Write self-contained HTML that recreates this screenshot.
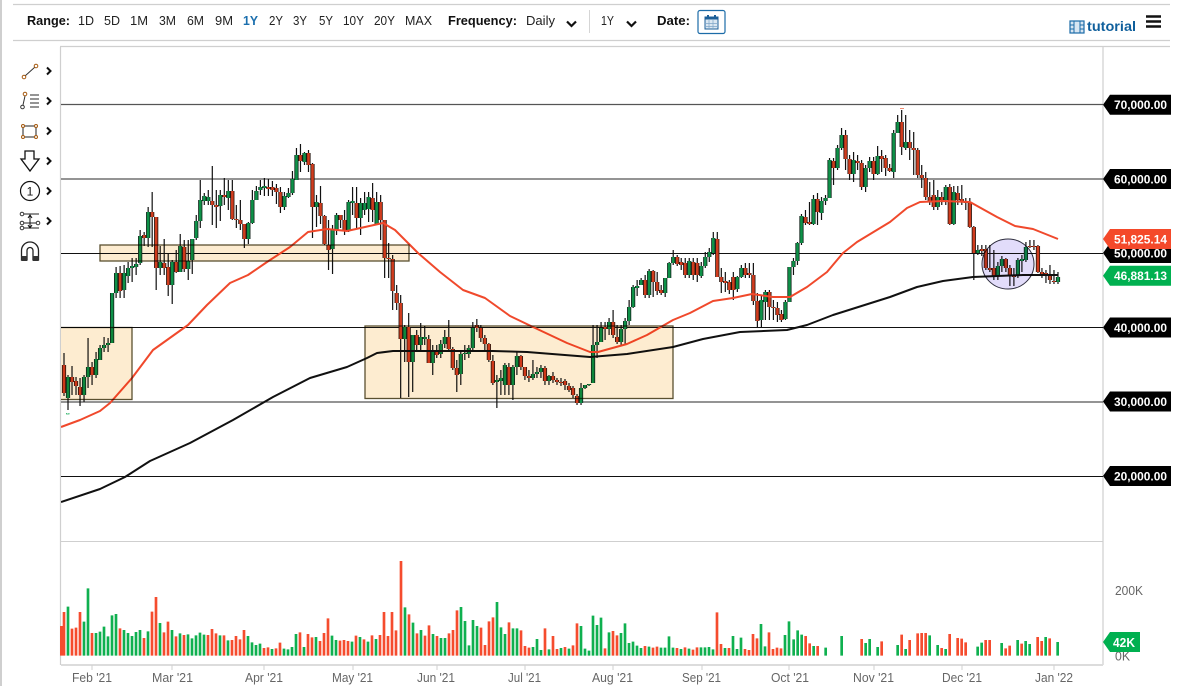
<!DOCTYPE html>
<html><head><meta charset="utf-8"><title>Chart</title>
<style>
html,body{margin:0;padding:0;background:#fff;width:1179px;height:686px;overflow:hidden}
svg{display:block;filter:blur(.35px)}
text{font-family:"Liberation Sans",sans-serif}
.h{font-size:13px;fill:#222}
.b{font-weight:bold;fill:#111}
.l{font-size:12px;font-weight:bold;fill:#fff}
.d{font-size:13px;fill:#666}
</style></head><body>
<svg width="1179" height="686" viewBox="0 0 1179 686" xmlns="http://www.w3.org/2000/svg">
<defs><clipPath id="plot"><rect x="61" y="47" width="1042" height="494"/></clipPath>
<path id="gb" d="M68 377V398M84 377V395M88 367V377M96 359V375M100 348V360M104 345V348M108 343V345M112 293V343M116 273V293M124 273V290M128 268V276M132 266V268M136 264V267M140 236V263M148 212V238M160 262V268M172 262V285M180 246V272M188 261V269M192 239V260M196 221V238M200 200V221M204 196V201M208 197V201M220 195V206M228 191V198M248 223V239M252 200V223M256 191V200M260 187V190M264 186V188M284 196V207M288 193V197M292 179V193M296 155V180M304 153V162M316 202V207M332 229V249M336 215V230M348 202V231M352 201V203M360 203V218M364 203V210M368 197V209M376 202V224M404 327V339M412 335V362M420 337V345M424 337V339M432 352V363M440 344V354M444 337V344M460 354V374M464 353V354M468 348V354M472 328V348M496 380V382M500 378V381M504 365V385M512 367V385M516 356V367M532 374V378M536 372V374M540 368V372M548 376V381M580 388V403M584 385V388M588 384V385M592 345V383M596 342V345M600 328V342M608 322V329M620 329V342M624 321V329M628 307V321M632 287V307M636 286V288M640 280V285M648 271V295M664 278V293M668 263V278M672 257V263M688 261V275M700 266V276M704 257V266M708 252V257M712 238V253M736 277V289M740 268V277M760 300V320M764 292V302M784 302V319M788 267V302M792 261V267M796 243V261M800 216V243M812 199V224M820 201V213M824 198V201M828 160V198M836 148V168M840 135V148M852 160V174M864 168V187M868 161V168M876 156V174M892 133V172M896 122V133M904 142V148M936 197V207M944 187V200M952 192V224M976 250V253M996 266V276M1000 259V266M1016 260V276M1020 259V261M1024 247V260M1056 277V282"/>
<path id="rb" d="M64 365V393M72 377V382M76 381V386M80 387V395M92 367V375M120 273V291M144 235V238M152 212V217M156 217V268M164 263V268M168 267V285M176 262V272M184 247V269M212 201V205M216 205V207M224 195V197M232 191V219M236 219V220M240 220V224M244 224V239M268 187V189M272 187V190M276 188V192M280 192V207M300 155V161M308 153V165M312 164V207M320 203V216M324 216V244M328 245V250M340 215V220M344 220V231M356 203V218M372 198V210M380 202V220M384 220V258M388 258V259M392 259V291M396 293V303M400 303V339M408 327V362M416 335V345M428 339V363M436 352V355M448 337V349M452 349V368M456 368V375M476 325V328M480 328V338M484 338V344M488 344V360M492 361V383M508 367V385M520 356V367M524 367V376M528 376V378M544 368V381M552 376V380M556 380V382M560 382V383M564 381V385M568 386V390M572 388V395M576 396V403M604 327V329M612 322V335M616 337V342M644 280V295M652 271V282M656 282V291M660 290V293M676 257V264M680 262V265M684 263V275M692 262V275M696 263V275M716 239V277M720 277V282M724 281V283M728 282V290M732 277V290M744 268V275M748 273V275M752 275V301M756 301V321M768 292V307M772 307V308M776 308V315M780 314V320M804 217V223M808 222V224M816 199V212M832 161V168M844 135V159M848 159V174M856 161V163M860 163V187M872 161V174M880 156V159M884 158V168M888 168V171M900 122V147M908 142V148M912 148V150M916 150V175M920 175V178M924 178V197M928 197V202M932 195V207M940 197V200M948 187V224M956 193V200M960 199V201M964 201V203M968 202V227M972 227V253M980 249V251M984 249V268M988 268V270M992 268V276M1004 259V268M1008 268V276M1012 276V277M1028 246V247M1032 246V247M1036 246V272M1040 272V274M1044 273V275M1048 274V280M1052 281V282"/>
</defs>

<!-- frame -->
<g fill="none" stroke="#cfcfcf">
<path d="M1 0V686" stroke-width="2"/>
<path d="M13 4.500H1170M13 40.500H1170M60 46.500H1170" stroke-width="1.200"/>
<path d="M60.500 47V665M1103 47V665" stroke-width="1.200"/>
<path d="M61 541.500H1103"/>
<path d="M61 665H1103" stroke-width="2" stroke="#dcdcdc"/>
<path d="M92 665V670M172 665V670M264 665V670M353 665V670M437 665V670M525 665V670M613 665V670M702 665V670M789 665V670M874 665V670M962 665V670M1054 665V670"/>
</g>

<!-- header -->
<text x="27" y="25" class="h b" textLength="43" lengthAdjust="spacingAndGlyphs">Range:</text>
<text x="78" y="25" class="h" textLength="16" lengthAdjust="spacingAndGlyphs">1D</text>
<text x="104" y="25" class="h" textLength="16" lengthAdjust="spacingAndGlyphs">5D</text>
<text x="130" y="25" class="h" textLength="18" lengthAdjust="spacingAndGlyphs">1M</text>
<text x="159" y="25" class="h" textLength="17" lengthAdjust="spacingAndGlyphs">3M</text>
<text x="187" y="25" class="h" textLength="17" lengthAdjust="spacingAndGlyphs">6M</text>
<text x="215" y="25" class="h" textLength="18" lengthAdjust="spacingAndGlyphs">9M</text>
<text x="243" y="25" class="h" style="font-weight:bold;fill:#1b6fae" textLength="15" lengthAdjust="spacingAndGlyphs">1Y</text>
<text x="269" y="25" class="h" textLength="14" lengthAdjust="spacingAndGlyphs">2Y</text>
<text x="293" y="25" class="h" textLength="14" lengthAdjust="spacingAndGlyphs">3Y</text>
<text x="319" y="25" class="h" textLength="14" lengthAdjust="spacingAndGlyphs">5Y</text>
<text x="343" y="25" class="h" textLength="21" lengthAdjust="spacingAndGlyphs">10Y</text>
<text x="374" y="25" class="h" textLength="21" lengthAdjust="spacingAndGlyphs">20Y</text>
<text x="405" y="25" class="h" textLength="27" lengthAdjust="spacingAndGlyphs">MAX</text>
<text x="448" y="25" class="h b" textLength="69" lengthAdjust="spacingAndGlyphs">Frequency:</text>
<text x="526" y="25" class="h" textLength="29" lengthAdjust="spacingAndGlyphs">Daily</text>
<path d="M567 21.500l4.500 4.500 4.500-4.500M627 21.500l4.500 4.500 4.500-4.500" fill="none" stroke="#111" stroke-width="2.200"/>
<path d="M589.500 10V33" stroke="#d5d5d5"/>
<text x="601" y="25" class="h" textLength="13" lengthAdjust="spacingAndGlyphs">1Y</text>
<text x="657" y="25" class="h b" textLength="33" lengthAdjust="spacingAndGlyphs">Date:</text>
<rect x="698" y="10.500" width="27" height="23" rx="2" fill="#fff" stroke="#1c6ca8" stroke-width="1.200"/>
<rect x="705" y="17" width="13" height="12" fill="#dbe7f2" stroke="#1c5f98"/>
<path d="M705 17h13v2.500h-13z" fill="#1c5f98"/><path d="M708 15v4M715 15v4" stroke="#1c5f98" stroke-width="2"/>
<path d="M709 20v9M713 20v9M705 23.500h13M705 26.500h13" stroke="#7fa5c8" stroke-width=".7"/>
<rect x="1070" y="21" width="14" height="12" fill="#d8e6f2" stroke="#1c6ca8" stroke-width="1.200"/>
<path d="M1074 21v12M1080 21v12M1070 25h4M1070 29h4M1080 25h4M1080 29h4" stroke="#1c6ca8" stroke-width="1"/>
<text x="1087" y="31" style="font-size:13.500px;font-weight:bold;fill:#0f5f9c" textLength="49" lengthAdjust="spacingAndGlyphs">tutorial</text>
<path d="M1146 16.500H1161M1146 21.500H1161M1146 26.500H1161" stroke="#111" stroke-width="2.600"/>

<!-- side tools -->
<g fill="none" stroke="#333" stroke-width="1">
<path d="M25 76L35 67"/><circle cx="24" cy="77" r="1.800" stroke="#a65a10"/><circle cx="36" cy="66" r="1.800" stroke="#a65a10"/>
<path d="M23 105L25 96"/><circle cx="22.500" cy="107" r="1.800"/><circle cx="25" cy="94" r="1.800" stroke="#a65a10"/>
<path d="M30 95H39M30 99H39M30 103H39M30 107H39" stroke-width="1.300" stroke="#555"/>
<rect x="23" y="126" width="13" height="11" stroke="#222"/>
<g stroke="#a65a10"><circle cx="23" cy="126" r="1.500" fill="#fff"/><circle cx="36" cy="126" r="1.500" fill="#fff"/><circle cx="23" cy="137" r="1.500" fill="#fff"/><circle cx="36" cy="137" r="1.500" fill="#fff"/></g>
<path d="M25 151H34V159H39L30 171L21 159H25Z" stroke="#111" stroke-width="1.300"/>
<circle cx="30" cy="191" r="9.500" stroke="#111" stroke-width="1.200"/>
<path d="M22 214H39M22 223H38M22 228H39" stroke="#222"/>
<path d="M30 216V227M28 218l2-3 2 3M28 225l2 3 2-3" stroke="#111"/>
<circle cx="22" cy="214" r="1.800" fill="#fff"/><circle cx="22" cy="223" r="1.800" fill="#fff"/><circle cx="22" cy="228" r="1.800" fill="#fff"/><circle cx="38" cy="223" r="1.800" fill="#fff"/>
<path d="M21.500 260V250.500a8.500 8.500 0 0 1 17 0V260H33V250.500a3 3 0 0 0-6 0V260Z" stroke="#222" stroke-width="1.300"/>
</g>
<path d="M21.500 256H27V261H21.500ZM33 256H38.500V261H33Z" fill="#333"/>
<text x="30" y="195.500" text-anchor="middle" style="font-size:12px;fill:#111">1</text>
<path d="M47 67.500l3.500 3.500-3.500 3.500M47 97.500l3.500 3.500-3.500 3.500M47 127.500l3.500 3.500-3.500 3.500M47 157.500l3.500 3.500-3.500 3.500M47 187.500l3.500 3.500-3.500 3.500M47 217.500l3.500 3.500-3.500 3.500" fill="none" stroke="#111" stroke-width="2"/>

<g clip-path="url(#plot)">
<!-- grid -->
<path d="M61 104.500H1103M61 179H1103M61 402H1103" stroke="#555" stroke-width="1.300"/>
<path d="M61 253.500H1103M61 327.500H1103M61 476.500H1103" stroke="#111"/>

<!-- candles -->
<g transform="translate(-.128 0) scale(1.002 1)" fill="none">
<path stroke="#111" stroke-width="1.200" d="M64 353V396M68 375V410M72 366V395M76 377V395M80 378V406M84 375V402M88 338V388M92 362V385M96 352V378M100 345V360M104 337V352M108 338V352M112 293V343M116 267V298M120 266V298M124 265V298M128 262V283M132 258V282M136 258V275M140 230V265M144 232V246M148 207V247M152 192V247M156 217V290M160 246V275M164 239V275M168 253V296M172 260V304M176 250V273M180 234V272M184 240V272M188 240V280M192 240V274M196 215V240M200 180V228M204 193V205M208 190V205M212 166V225M216 190V228M220 190V221M224 178V205M228 180V210M232 180V220M236 205V228M240 200V230M244 224V248M248 222V244M252 190V224M256 186V200M260 180V195M264 178V196M268 179V196M272 181V196M276 184V204M280 187V213M284 192V210M288 188V198M292 171V195M296 148V180M300 144V172M304 152V165M308 150V172M312 163V238M316 195V227M320 186V224M324 215V245M328 220V270M332 225V274M336 213V235M340 215V228M344 210V235M348 200V232M352 187V215M356 187V228M360 198V235M364 192V215M368 192V222M372 183V222M376 192V222M380 195V240M384 220V278M388 243V278M392 255V310M396 285V310M400 295V398M404 325V362M408 313V397M412 335V392M416 330V350M420 323V350M424 326V345M428 335V363M432 345V375M436 345V358M440 340V358M444 330V348M448 320V350M452 347V370M456 360V392M460 352V385M464 345V360M468 345V358M472 322V350M476 319V332M480 325V342M484 335V350M488 343V362M492 355V385M496 375V408M500 370V395M504 363V395M508 363V395M512 365V400M516 352V375M520 355V370M524 367V380M528 370V382M532 360V380M536 367V378M540 365V378M544 366V385M548 375V385M552 372V383M556 378V385M560 378V386M564 379V390M568 383V392M572 386V398M576 394V405M580 383V405M584 385V389M588 384V386M592 325V383M596 325V358M600 322V342M604 322V340M608 318V335M612 310V338M616 325V344M620 325V345M624 318V345M628 300V325M632 285V308M636 280V296M640 278V285M644 275V298M648 269V298M652 270V297M656 272V295M660 285V295M664 278V297M668 262V278M672 250V265M676 255V266M680 258V270M684 258V278M688 258V278M692 258V280M696 258V282M700 262V278M704 252V268M708 248V262M712 232V255M716 232V277M720 268V293M724 272V292M728 280V294M732 272V300M736 276V292M740 265V278M744 263V278M748 263V278M752 263V305M756 293V328M760 295V328M764 290V320M768 290V320M772 300V320M776 302V322M780 310V322M784 300V320M788 267V302M792 258V275M796 242V265M800 214V245M804 210V225M808 202V225M812 195V225M816 193V225M820 197V220M824 195V205M828 158V198M832 158V185M836 145V170M840 128V150M844 130V170M848 155V180M852 152V182M856 155V170M860 160V190M864 165V192M868 157V172M872 157V180M876 146V175M880 150V172M884 155V176M888 164V172M892 130V178M896 115V133M900 110V155M904 115V150M908 130V160M912 132V175M916 148V178M920 165V188M924 172V200M928 182V205M932 180V210M936 190V210M940 192V205M944 185V205M948 184V225M952 186V225M956 186V205M960 185V205M964 198V210M968 198V228M972 226V280M976 245V255M980 245V256M984 245V270M988 245V272M992 250V280M996 262V280M1000 256V272M1004 258V272M1008 265V286M1012 268V286M1016 258V278M1020 255V272M1024 242V262M1028 240V248M1032 240V250M1036 245V273M1040 268V278M1044 270V283M1048 265V284M1052 270V284M1056 272V284"/>
<use href="#gb" stroke="#12221a" stroke-width="4.200"/>
<use href="#rb" stroke="#22140e" stroke-width="4.200"/>
<use href="#gb" stroke="#0e9148" stroke-width="2.600"/>
<use href="#rb" stroke="#d03c1e" stroke-width="2.600"/>
</g>

<!-- moving averages -->
<polyline fill="none" stroke="#f0492c" stroke-width="2" stroke-linejoin="round" points="61,427 80,420 100,411 110,403 132,378 153,350 167,340 188,325 207,305 230,283 248,275 267,262 290,247 308,232 327,229 347,231 383,223 395,230 418,253 440,272 463,290 485,298 510,316 533,327 567,343 590,352 598,352 627,344 647,335 673,320 690,313 713,301 733,298 752,294 773,297 790,297 807,287 827,272 843,253 857,242 890,222 907,208 920,202 943,201 970,202 997,217 1015,226 1033,229 1058,239"/>
<polyline fill="none" stroke="#111" stroke-width="2" stroke-linejoin="round" points="61,502 100,489 125,477 150,461 190,443 233,420 273,397 310,378 347,367 367,358 377,353 393,351 427,351 493,351 527,352 590,357 627,354 673,347 703,339 740,332 787,330 807,325 833,315 890,297 917,287 943,281 973,277 1023,275 1058,275"/>

<!-- overlays -->
<g fill="#fdecd0" stroke="#5a5030" stroke-width="1.300" style="mix-blend-mode:multiply">
<rect x="50" y="327.500" width="82" height="72"/>
<rect x="100" y="245" width="309" height="16"/>
<rect x="365" y="326" width="308" height="72.500"/>
</g>
<ellipse cx="1008" cy="264" rx="26" ry="25" fill="#e2dcfa" stroke="#2c2c3c" stroke-width="1" style="mix-blend-mode:multiply"/>
<path d="M900 108.500h4" stroke="#f08a70" stroke-width="1"/>
<path d="M66.500 413v1h2.500v-1" stroke="#20b060" fill="none" stroke-width=".8"/>
</g>

<!-- volume -->
<g transform="translate(0 550) scale(.33333)" fill="none" stroke-width="8">
<path stroke="#0fb04f" d="M204 170V317M252 215V317M264 115V317M288 249V317M300 245V317M312 230V317M324 259V317M336 196V317M348 192V317M372 240V317M384 249V317M396 258V317M408 246V317M420 240V317M444 244V317M480 219V317M516 240V317M540 250V317M564 253V317M576 265V317M588 256V317M600 248V317M612 254V317M660 256V317M684 271V317M744 258V317M756 277V317M768 285V317M780 281V317M816 297V317M852 296V317M864 298V317M876 291V317M888 252V317M912 291V317M948 261V317M996 257V317M1008 270V317M1056 275V317M1080 261V317M1104 275V317M1128 267V317"/>
<path stroke="#f54c2e" d="M184 228V317M192 186V317M216 236V317M228 233V317M240 186V317M276 249V317M360 235V317M432 264V317M456 185V317M468 141V317M492 247V317M504 215V317M528 259V317M552 255V317M624 255V317M636 237V317M648 250V317M672 256V317M696 270V317M708 258V317M720 268V317M732 240V317M792 294V317M804 292V317M828 295V317M840 278V317M900 247V317M924 252V317M936 262V317M960 273V317M972 249V317M984 205V317M1020 272V317M1032 270V317M1044 273V317M1068 257V317M1092 268V317M1116 256V317M1140 255V317M1152 186V317M1164 258V317M1176 186V317M1188 241V317"/>
</g>
<g transform="translate(400 550) scale(.33333)" fill="none" stroke-width="8">
<path stroke="#f54c2e" d="M3 33V317M27 193V317M51 250V317M75 257V317M87 226V317M111 258V317M147 250V317M159 240V317M171 181V317M243 233V317M255 285V317M267 214V317M279 202V317M327 217V317M363 241V317M375 288V317M387 293V317M435 235V317M459 258V317M471 297V317M495 291V317M519 286V317M531 220V317M615 295V317M639 243V317M651 256V317M735 288V317M759 293V317M771 290V317M831 294V317M855 292V317M879 299V317M891 292V317M951 187V317M963 282V317M987 294V317M1035 297V317M1047 300V317M1059 252V317M1071 265V317M1107 247V317M1119 297V317M1131 293V317M1143 295V317"/>
<path stroke="#0fb04f" d="M15 172V317M39 218V317M63 240V317M99 252V317M123 264V317M135 264V317M183 171V317M195 213V317M207 286V317M219 210V317M231 228V317M291 156V317M303 232V317M315 252V317M339 235V317M351 235V317M399 291V317M411 267V317M423 300V317M447 298V317M483 294V317M507 296V317M543 228V317M555 296V317M567 302V317M579 197V317M591 225V317M603 203V317M627 247V317M663 249V317M675 220V317M687 279V317M699 275V317M711 287V317M723 294V317M747 290V317M783 293V317M795 293V317M807 259V317M819 293V317M843 297V317M867 296V317M903 292V317M915 292V317M927 291V317M939 298V317M975 294V317M999 258V317M1011 297V317M1023 263V317M1083 222V317M1095 289V317M1155 255V317M1167 214V317"/>
</g>
<g transform="translate(790 550) scale(.33333)" fill="none" stroke-width="8">
<path stroke="#0fb04f" d="M11 268V317M23 241V317M35 254V317M71 288V317M107 293V317M155 258V317M227 279V317M239 267V317M263 291V317M323 285V317M347 297V317M419 256V317M443 285V317M467 297V317M563 290V317M575 278V317M635 279V317M683 270V317M707 273V317M719 282V317M767 261V317M803 276V317"/>
<path stroke="#f54c2e" d="M47 258V317M59 280V317M83 288V317M215 267V317M275 274V317M335 254V317M359 270V317M383 250V317M395 249V317M407 249V317M455 294V317M479 252V317M503 264V317M515 266V317M527 277V317M587 270V317M599 270V317M647 295V317M659 287V317M695 281V317M743 261V317M755 273V317M779 265V317"/>
</g>

<!-- date labels -->
<text x="72" y="682" class="d" textLength="40" lengthAdjust="spacingAndGlyphs">Feb '21</text>
<text x="152" y="682" class="d" textLength="41" lengthAdjust="spacingAndGlyphs">Mar '21</text>
<text x="245" y="682" class="d" textLength="38" lengthAdjust="spacingAndGlyphs">Apr '21</text>
<text x="332" y="682" class="d" textLength="41" lengthAdjust="spacingAndGlyphs">May '21</text>
<text x="417" y="682" class="d" textLength="38" lengthAdjust="spacingAndGlyphs">Jun '21</text>
<text x="508" y="682" class="d" textLength="33" lengthAdjust="spacingAndGlyphs">Jul '21</text>
<text x="592" y="682" class="d" textLength="41" lengthAdjust="spacingAndGlyphs">Aug '21</text>
<text x="682" y="682" class="d" textLength="39" lengthAdjust="spacingAndGlyphs">Sep '21</text>
<text x="771" y="682" class="d" textLength="38" lengthAdjust="spacingAndGlyphs">Oct '21</text>
<text x="853" y="682" class="d" textLength="41" lengthAdjust="spacingAndGlyphs">Nov '21</text>
<text x="942" y="682" class="d" textLength="40" lengthAdjust="spacingAndGlyphs">Dec '21</text>
<text x="1035" y="682" class="d" textLength="38" lengthAdjust="spacingAndGlyphs">Jan '22</text>
<text x="1115" y="595" class="d" textLength="28" lengthAdjust="spacingAndGlyphs">200K</text>
<text x="1115" y="660.500" class="d" textLength="15" lengthAdjust="spacingAndGlyphs">0K</text>

<!-- price flags -->
<g>
<path d="M1103 104.700l7-10h61v20h-61z" fill="#000"/><text x="1114" y="109" class="l" textLength="53" lengthAdjust="spacingAndGlyphs">70,000.00</text>
<path d="M1103 179l7-10h61v20h-61z" fill="#000"/><text x="1114" y="183.500" class="l" textLength="53" lengthAdjust="spacingAndGlyphs">60,000.00</text>
<path d="M1103 253l7-10h61v20h-61z" fill="#000"/><text x="1114" y="257.500" class="l" textLength="53" lengthAdjust="spacingAndGlyphs">50,000.00</text>
<path d="M1103 327.500l7-10h61v20h-61z" fill="#000"/><text x="1114" y="332" class="l" textLength="53" lengthAdjust="spacingAndGlyphs">40,000.00</text>
<path d="M1103 401.500l7-10h61v20h-61z" fill="#000"/><text x="1114" y="406" class="l" textLength="53" lengthAdjust="spacingAndGlyphs">30,000.00</text>
<path d="M1103 476l7-10h61v20h-61z" fill="#000"/><text x="1114" y="480.500" class="l" textLength="53" lengthAdjust="spacingAndGlyphs">20,000.00</text>
<path d="M1103 239l7-10h61v20h-61z" fill="#f4492a"/><text x="1114" y="243.500" class="l" textLength="53" lengthAdjust="spacingAndGlyphs">51,825.14</text>
<path d="M1103 275.700l7-10h61v20h-61z" fill="#00b050"/><text x="1114" y="280" class="l" textLength="53" lengthAdjust="spacingAndGlyphs">46,881.13</text>
<path d="M1103 642l7-10h30v20h-30z" fill="#00b050"/><text x="1113" y="647" class="l" style="font-size:13px" textLength="22" lengthAdjust="spacingAndGlyphs">42K</text>
</g>
</svg>
</body></html>
